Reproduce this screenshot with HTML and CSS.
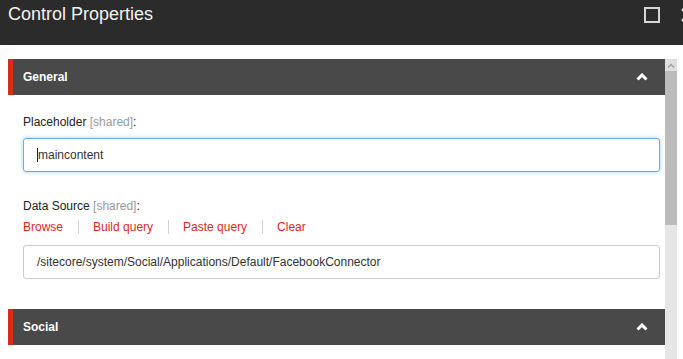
FILE: index.html
```html
<!DOCTYPE html>
<html lang="en">
<head>
  <meta charset="UTF-8">
  <title>Control Properties</title>
  <link rel="stylesheet" href="styles.css">
</head>
<body>
  <div class="titlebar">
    <span class="title">Control Properties</span>
    <div class="window-buttons">
      <svg class="btn-max" width="16" height="16" viewBox="0 0 16 16"><rect x="1" y="1" width="14" height="14" fill="none" stroke="#d6d6d6" stroke-width="2"/></svg>
      <svg class="btn-close" width="16" height="16" viewBox="0 0 16 16"><path d="M2 2 L14 14 M14 2 L2 14" stroke="#d6d6d6" stroke-width="2.5"/></svg>
    </div>
  </div>

  <div class="frame">
    <div class="panel">
      <div class="section-header">
        <span>General</span>
        <svg width="12" height="8" viewBox="0 0 12 8"><path d="M1.5 6.5 L6 2 L10.5 6.5" fill="none" stroke="#fff" stroke-width="3"/></svg>
      </div>

      <div class="section-body">
        <div class="field-label">Placeholder <span class="shared">[shared]</span>:</div>
        <div class="textbox focused"><span class="caret"></span>maincontent</div>

        <div class="field-label second">Data Source <span class="shared">[shared]</span>:</div>
        <div class="links">
          <a>Browse</a>
          <a>Build query</a>
          <a>Paste query</a>
          <a>Clear</a>
        </div>
        <div class="textbox">/sitecore/system/Social/Applications/Default/FacebookConnector</div>
      </div>

      <div class="section-header">
        <span>Social</span>
        <svg width="12" height="8" viewBox="0 0 12 8"><path d="M1.5 6.5 L6 2 L10.5 6.5" fill="none" stroke="#fff" stroke-width="3"/></svg>
      </div>
    </div>

    <div class="scrollbar">
      <div class="scroll-up">
        <svg width="8" height="5" viewBox="0 0 8 5"><path d="M1 4.5 L4 1.5 L7 4.5" fill="none" stroke="#a3a3a3" stroke-width="1.5"/></svg>
      </div>
      <div class="scroll-thumb"></div>
    </div>
  </div>
</body>
</html>
```

FILE: styles.css
```css
html, body {
  margin: 0;
  height: 100%;
  overflow: hidden;
}
body {
  font-family: "Liberation Sans", Arial, sans-serif;
  background: #fff;
  color: #222;
}
.titlebar {
  height: 45px;
  background: #2b2b2b;
  display: flex;
  align-items: flex-start;
  justify-content: space-between;
  padding-left: 8px;
  white-space: nowrap;
}
.title {
  color: #f2f2f2;
  font-size: 18px;
  line-height: 18px;
  margin-top: 5px;
}
.window-buttons {
  display: flex;
  gap: 20px;
  margin-top: 7px;
  margin-right: -13px;
}
.frame {
  display: flex;
  margin-top: 14px;
  margin-left: 8px;
  width: 669px;
  height: 300px;
}
.panel {
  flex: 1;
}
.section-header {
  height: 36px;
  background: #494949;
  border-left: 5px solid #dc291e;
  display: flex;
  align-items: center;
  justify-content: space-between;
  padding: 0 17px 0 10px;
  color: #fff;
  font-size: 12px;
  font-weight: bold;
}
.section-body {
  padding: 20px 5px 30px 15px;
}
.field-label {
  font-size: 12px;
  line-height: 14px;
  color: #222;
}
.field-label.second {
  margin-top: 27px;
}
.shared {
  color: #999;
}
.textbox {
  height: 34px;
  box-sizing: border-box;
  border: 1px solid #ccc;
  border-radius: 3px;
  padding: 0 13px;
  display: flex;
  align-items: center;
  font-size: 12px;
  color: #333;
  margin-top: 9px;
}
.textbox.focused {
  border-color: #66afe9;
  box-shadow: 0 0 4px rgba(102, 175, 233, 0.6);
}
.caret {
  width: 1px;
  height: 14px;
  background: #222;
}
.links {
  display: flex;
  margin-top: 7px;
  font-size: 12px;
  line-height: 14px;
}
.links + .textbox {
  margin-top: 11px;
}
.links a {
  color: #dc291e;
  padding: 0 15px 0 14px;
  border-left: 1px solid #d5d5d5;
}
.links a:first-child {
  padding-left: 0;
  border-left: none;
}
.scrollbar {
  width: 12px;
  background: #e6e6e6;
}
.scroll-up {
  height: 12px;
  background: #dedede;
  display: flex;
  align-items: center;
  justify-content: center;
}
.scroll-thumb {
  height: 154px;
  background: #bcbcbc;
}
```
